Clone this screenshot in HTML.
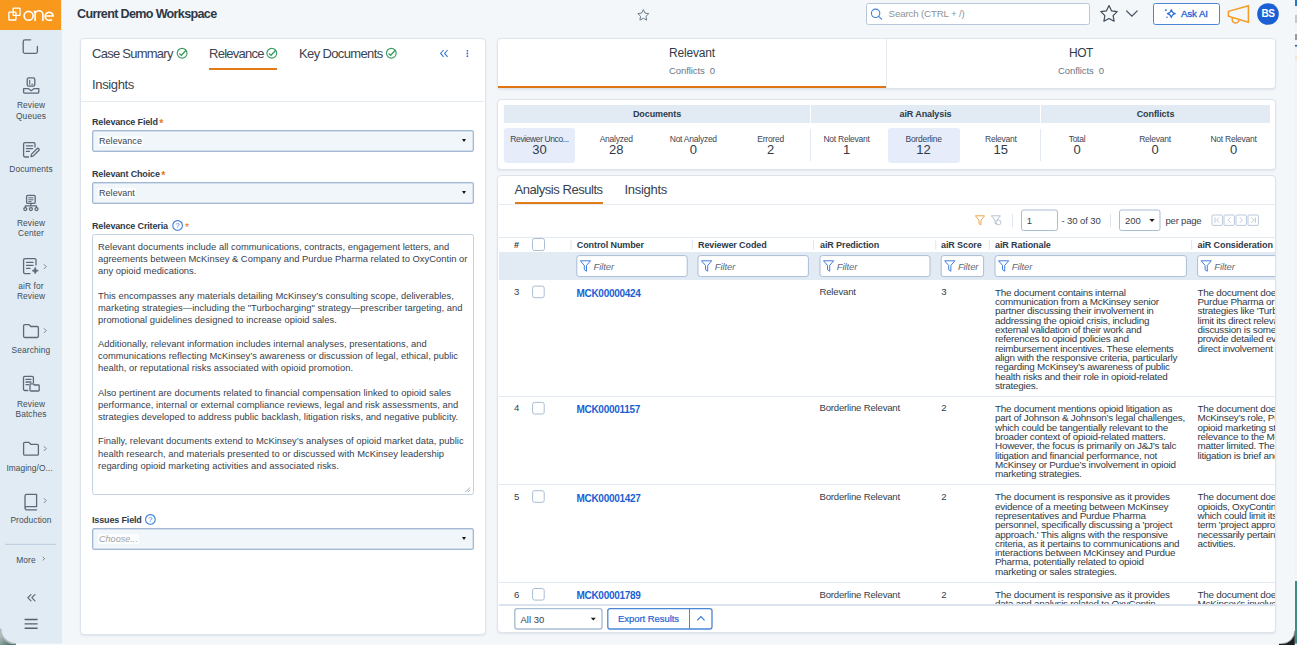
<!DOCTYPE html>
<html><head><meta charset="utf-8">
<style>
*{box-sizing:border-box;margin:0;padding:0}
html,body{width:1297px;height:645px;overflow:hidden;background:#f3f7fa;font-family:"Liberation Sans",sans-serif;color:#2e3a48}
.a{position:absolute;white-space:nowrap}
svg{position:absolute;overflow:visible}
#side{position:absolute;left:0;top:0;width:62px;height:645px;background:#e1ebf4}
#logo{position:absolute;left:0;top:0;width:61px;height:30px;background:#f8981d}
.nv{position:absolute;left:0;width:62px;text-align:center;font-size:8.4px;color:#414b57;line-height:10.5px;letter-spacing:.12px}
.card{position:absolute;background:#fff;border:1px solid #dde4ec;border-radius:4px;box-shadow:0 1px 2px rgba(40,60,90,.09)}
.tab{position:absolute;font-size:13px;color:#3b444f;white-space:nowrap;letter-spacing:-.5px;line-height:15px}
.lbl{position:absolute;font-size:9px;font-weight:bold;color:#2e3a48;white-space:nowrap;letter-spacing:-.15px;line-height:11px}
.sel{position:absolute;left:92px;width:382px;height:22px;border:1px solid #a3b8d2;box-shadow:inset 0 0 0 .4px #b4c6dc;border-radius:2px;background:#f1f6fb;font-size:9px;color:#3a4450;padding:0 5px;line-height:20.5px;letter-spacing:.05px}
.caret{position:absolute;right:7px;top:8.4px;width:0;height:0;border-left:2.6px solid transparent;border-right:2.6px solid transparent;border-top:3.2px solid #111}
.st{color:#e07b1a;font-size:10.5px;margin-left:1.5px;position:relative;top:2px;line-height:5px}
.td{position:absolute;font-size:9.6px;color:#333e4b;line-height:11px;white-space:nowrap;letter-spacing:-.2px}
.mk{position:absolute;font-size:10px;font-weight:bold;color:#1b5fd4;line-height:11px;white-space:nowrap;letter-spacing:-.3px}
.tx{position:absolute;font-size:9.9px;color:#2f3a47;line-height:9.33px;white-space:nowrap;letter-spacing:-.24px}
.th{position:absolute;top:239.5px;font-size:9px;font-weight:bold;color:#2e3a48;line-height:11px;letter-spacing:-.1px;white-space:nowrap}
.fp{position:absolute;top:260.5px;font-size:9.5px;font-style:italic;color:#5f6a77;line-height:11px;letter-spacing:-.1px}
.sh{position:absolute;top:108.5px;text-align:center;font-size:9px;font-weight:bold;color:#2e3a48;line-height:11px;letter-spacing:-.1px}
.sl{position:absolute;top:133.5px;width:80px;text-align:center;font-size:8.5px;color:#3a4553;line-height:10px;letter-spacing:-.25px}
.sn{position:absolute;top:142.3px;width:80px;text-align:center;font-size:13px;color:#2e3a48;line-height:15px}
</style></head><body>
<!-- SIDEBAR -->
<div id="side"></div>
<div id="logo"></div>

<!-- logo -->
<svg style="left:0;top:0" width="61" height="30" viewBox="0 0 61 30">
<g fill="none" stroke="#fff" stroke-width="1.3">
<rect x="8.85" y="12.1" width="7.1" height="7.9" rx=".4"/>
<rect x="13.15" y="8.15" width="6.9" height="7.3" rx=".4"/>
<ellipse cx="28.6" cy="15.85" rx="4.55" ry="4.45" stroke-width="1.6"/>
<path d="M33.6 11.6h1.5v9.3M35.1 14.6a3.9 3.9 0 0 1 7.8 0v6.3" stroke-width="1.6"/>
<path d="M45.2 16h8a4.05 4.05 0 1 0-1.3 3.3" stroke-width="1.6"/>
</g>
</svg>
<!-- icon 1 -->
<svg style="left:0;top:0" width="62" height="645" viewBox="0 0 62 645">
<g fill="none" stroke="#5d6978" stroke-width="1.3" stroke-linecap="round" stroke-linejoin="round">
<path d="M30.6 39.8H25a1.8 1.8 0 0 0-1.8 1.8V51.6a1.8 1.8 0 0 0 1.8 1.8H35.6a1.8 1.8 0 0 0 1.8-1.8V46.4"/>
<!-- review queues -->
<rect x="27.2" y="77.9" width="7.6" height="8.3" rx="1.6"/>
<path d="M29.7 80.3v3.9M31.8 84.2h1" stroke-width="1.1"/>
<path d="M23.6 88.6h4.6l3 2.2 3-2.2h4.6v3.3a1.2 1.2 0 0 1-1.2 1.2H24.8a1.2 1.2 0 0 1-1.2-1.2z"/>
<!-- documents -->
<path d="M35 147V144a1.4 1.4 0 0 0-1.4-1.4H25a1.4 1.4 0 0 0-1.4 1.4v11.6a1.4 1.4 0 0 0 1.4 1.4h3.5"/>
<path d="M26.4 145.8h6.2M26.4 148.6h6.2M26.4 151.4h3"/>
<path d="M31 156.6l.6-2.5 5.4-5.4a1.25 1.25 0 0 1 1.8 1.8l-5.4 5.4z"/>
<!-- review center -->
<rect x="26.6" y="195.4" width="8.6" height="8" rx="1.2"/>
<path d="M28.7 197.8h4.4M28.7 199.8h4.4M28.7 201.6h2.4" stroke-width="1"/>
<path d="M30.9 203.4v2.4M25.3 207.6v-1.8h11.2v1.8"/>
<circle cx="25.3" cy="209.1" r="1.5"/><circle cx="30.9" cy="209.1" r="1.5"/><circle cx="36.5" cy="209.1" r="1.5"/>
<!-- air for review -->
<path d="M36 265V260a1.4 1.4 0 0 0-1.4-1.4H25a1.4 1.4 0 0 0-1.4 1.4v12.2a1.4 1.4 0 0 0 1.4 1.4h5"/>
<path d="M26.6 262.4h6.4M26.6 265.4h6.4M26.6 268.4h3.4"/>
<path d="M35.2 267.5q.4 2.6 3.2 3.2q-2.8.6-3.2 3.2q-.4-2.6-3.2-3.2q2.8-.6 3.2-3.2z" fill="#5d6978" stroke-width=".6"/>
<!-- searching folder -->
<path d="M23.6 325.8a1.2 1.2 0 0 1 1.2-1.2h4.2l1.8 1.9h6.4a1.2 1.2 0 0 1 1.2 1.2v8.6a1.2 1.2 0 0 1-1.2 1.2H24.8a1.2 1.2 0 0 1-1.2-1.2z"/>
<!-- review batches -->
<path d="M33.4 382.5V377.6a1.3 1.3 0 0 0-1.3-1.3H24.8a1.3 1.3 0 0 0-1.3 1.3v11.6a1.3 1.3 0 0 0 1.3 1.3h3"/>
<path d="M26 379.4h5M26 382h5M26 384.6h2.6"/>
<path d="M30 384.6a.8.8 0 0 1 .8-.8h2.4l1.2 1.2h4a.8.8 0 0 1 .8.8v4.4a.8.8 0 0 1-.8.8h-7.6a.8.8 0 0 1-.8-.8z"/>
<!-- imaging folder -->
<path d="M23.6 443.6a1.2 1.2 0 0 1 1.2-1.2h4.2l1.8 1.9h6.4a1.2 1.2 0 0 1 1.2 1.2v8.4a1.2 1.2 0 0 1-1.2 1.2H24.8a1.2 1.2 0 0 1-1.2-1.2z"/>
<!-- production book -->
<path d="M25 507.6V496a1.6 1.6 0 0 1 1.6-1.6h10v12.2H26.6a1.6 1.6 0 0 0 0 3.2h10"/>
<!-- chevrons -->
<path d="M44.2 264.6l2 2-2 2M44.2 328.6l2 2-2 2M44.2 446.6l2 2-2 2M44.2 498.6l2 2-2 2M43 557l1.6 1.6-1.6 1.6" stroke="#77828f" stroke-width="1"/>
<!-- collapse -->
<path d="M31 594.6l-3.2 3.1 3.2 3.1M35 594.6l-3.2 3.1 3.2 3.1" stroke="#55606e" stroke-width="1.1"/>
<path d="M24.6 619.5h13M24.6 623.9h13M24.6 628.3h13" stroke="#55606e" stroke-width="1.4" stroke-linecap="butt"/>
</g>
<path d="M5 544.3h51" stroke="#b9cadc" stroke-width="1"/>
</svg>
<div class="nv" style="top:100.3px">Review<br>Queues</div>
<div class="nv" style="top:164.2px">Documents</div>
<div class="nv" style="top:217.8px">Review<br>Center</div>
<div class="nv" style="top:280.8px">aiR for<br>Review</div>
<div class="nv" style="top:344.8px">Searching</div>
<div class="nv" style="top:398.8px">Review<br>Batches</div>
<div class="nv" style="top:462.8px;letter-spacing:.05px;left:-1.5px">Imaging/O...</div>
<div class="nv" style="top:515.4px">Production</div>
<div class="nv" style="top:554.8px;left:-5px">More</div>

<!-- TOPBAR -->
<div class="a" style="left:77px;top:7.3px;font-size:12.6px;font-weight:bold;color:#2e3744;letter-spacing:-.68px;line-height:15px">Current Demo Workspace</div>


<!-- top bar icons -->
<svg style="left:0;top:0" width="1297" height="40" viewBox="0 0 1297 40">
<path d="M643.3 9.6l1.7 3.5 3.8.5-2.8 2.7.7 3.8-3.4-1.8-3.4 1.8.7-3.8-2.8-2.7 3.8-.5z" fill="none" stroke="#6f7c8b" stroke-width="1"/>
<rect x="866.5" y="3.5" width="223" height="21" rx="2" fill="#fff" stroke="#b7c8dc"/>
<circle cx="875.6" cy="13.3" r="4.2" fill="none" stroke="#3f7fd8" stroke-width="1.1"/>
<path d="M878.6 16.4l3 2.8" stroke="#3f7fd8" stroke-width="1.1" stroke-linecap="round"/>
<path d="M1109 5.6l2.5 5.2 5.7.8-4.1 4 1 5.6-5.1-2.7-5.1 2.7 1-5.6-4.1-4 5.7-.8z" fill="none" stroke="#3f4a57" stroke-width="1.2" stroke-linejoin="round"/>
<path d="M1126.3 10.6l5.6 5.6 5.6-5.6" fill="none" stroke="#3f4a57" stroke-width="1.2"/>
<rect x="1153.5" y="3.5" width="66" height="21" rx="2" fill="#fff" stroke="#4a86d6"/>
<path d="M1171.3 9.6q.6 3.4 4 4q-3.4.6-4 4q-.6-3.4-4-4q3.4-.6 4-4z" fill="none" stroke="#2f6fd0" stroke-width="1.1" stroke-linejoin="round"/>
<path d="M1165.9 9.2v2M1164.9 10.2h2" stroke="#2f6fd0" stroke-width=".9"/><circle cx="1167" cy="17.3" r=".8" fill="#2f6fd0"/>
<path d="M1228.4 11.4L1248.4 5.7V22.3L1228.4 16.2Z" fill="none" stroke="#f59a23" stroke-width="1.5" stroke-linejoin="miter"/>
<path d="M1232.7 17.5A3.5 3.5 0 1 0 1239.1 19.3" fill="none" stroke="#f59a23" stroke-width="1.4"/>
<circle cx="1268" cy="14" r="10.8" fill="#1b5fd4"/>
</svg>
<div class="a" style="left:888.6px;top:7.8px;font-size:9.8px;color:#8e9398;letter-spacing:-.2px;line-height:11px">Search (CTRL + /)</div>
<div class="a" style="left:1181px;top:7.8px;font-size:9.7px;color:#1b5fd4;letter-spacing:-.1px;-webkit-text-stroke:.3px #1b5fd4;line-height:11px">Ask AI</div>
<div class="a" style="left:1257px;top:7.8px;width:22px;text-align:center;font-size:10px;font-weight:bold;color:#fff;line-height:11px;letter-spacing:-.4px">BS</div>

<!-- LEFT CARD -->
<div class="card" style="left:80px;top:38px;width:406px;height:596.5px"></div>
<div class="tab" style="left:92px;top:46px;letter-spacing:-.74px">Case Summary</div>
<div class="tab" style="left:209px;top:46px;letter-spacing:-.74px">Relevance</div>
<div class="a" style="left:209px;top:68px;width:68px;height:2px;background:#e07b1a"></div>
<div class="tab" style="left:299px;top:46px;letter-spacing:-.63px">Key Documents</div>
<div class="tab" style="left:92px;top:77px;letter-spacing:-.35px">Insights</div>
<div class="a" style="left:81px;top:101px;width:403px;height:1px;background:#e3eaf1"></div>

<div class="lbl" style="left:92px;top:116.7px">Relevance Field<span class="st">*</span></div>
<div class="sel" style="top:130px"><span style="background:#fcfdfe;padding:0 1px">Relevance</span><div class="caret"></div></div>
<div class="lbl" style="left:92px;top:168.7px">Relevant Choice<span class="st">*</span></div>
<div class="sel" style="top:182px"><span style="background:#fcfdfe;padding:0 1px">Relevant</span><div class="caret"></div></div>
<div class="lbl" style="left:92px;top:220.7px">Relevance Criteria</div>


<svg style="left:0;top:0" width="490" height="645" viewBox="0 0 490 645">
<g fill="none" stroke="#3b9c62" stroke-width="1.15">
<circle cx="182.1" cy="53.2" r="4.9"/><path d="M179.3 53.5l2.1 1.8 4.6-5" stroke-width="1.3"/>
<circle cx="271.8" cy="53.2" r="4.9"/><path d="M269.0 53.5l2.1 1.8 4.6-5" stroke-width="1.3"/>
<circle cx="391.3" cy="53.2" r="4.9"/><path d="M388.5 53.5l2.1 1.8 4.6-5" stroke-width="1.3"/>
</g>
<path d="M443.6 50l-3 3.4 3 3.4M447.6 50l-3 3.4 3 3.4" fill="none" stroke="#3a7bd5" stroke-width="1.1"/>
<g fill="#2f6fd0"><circle cx="467.4" cy="50.8" r=".9"/><circle cx="467.4" cy="53.5" r=".9"/><circle cx="467.4" cy="56.2" r=".9"/></g>
<circle cx="177.6" cy="225.4" r="4.8" fill="none" stroke="#3b7dd8" stroke-width="1.1"/>
<text x="177.6" y="228.4" font-family="Liberation Sans" font-size="7.5" fill="#3b7dd8" text-anchor="middle">?</text>
<circle cx="150.4" cy="519.4" r="4.8" fill="none" stroke="#3b7dd8" stroke-width="1.1"/>
<text x="150.4" y="522.4" font-family="Liberation Sans" font-size="7.5" fill="#3b7dd8" text-anchor="middle">?</text>
<rect x="92.5" y="234.5" width="381" height="260" rx="2" fill="#fff" stroke="#c3d2e3"/>
<path d="M465.5 492l4.5-4.5M468 492l2-2" stroke="#8e98a4" stroke-width=".8"/>
</svg>
<div class="a" style="left:185px;top:222px;font-size:10.5px;color:#e07b1a;line-height:11px">*</div>
<div class="a" style="left:98px;top:240.9px;font-size:9.4px;color:#37414d;line-height:12.15px;white-space:pre;letter-spacing:.02px">Relevant documents include all communications, contracts, engagement letters, and
agreements between McKinsey &amp; Company and Purdue Pharma related to OxyContin or
any opioid medications.

This encompasses any materials detailing McKinsey’s consulting scope, deliverables,
marketing strategies—including the "Turbocharging" strategy—prescriber targeting, and
promotional guidelines designed to increase opioid sales.

Additionally, relevant information includes internal analyses, presentations, and
communications reflecting McKinsey’s awareness or discussion of legal, ethical, public
health, or reputational risks associated with opioid promotion.

Also pertinent are documents related to financial compensation linked to opioid sales
performance, internal or external compliance reviews, legal and risk assessments, and
strategies developed to address public backlash, litigation risks, and negative publicity.

Finally, relevant documents extend to McKinsey’s analyses of opioid market data, public
health research, and materials presented to or discussed with McKinsey leadership
regarding opioid marketing activities and associated risks.</div>
<div class="lbl" style="left:92px;top:514.7px">Issues Field</div>
<div class="sel" style="top:528px;color:#9ea3a8;font-style:italic"><span style="background:#fcfdfe;padding:0 1px">Choose...</span><div class="caret"></div></div>

<!-- RIGHT TOP CARD -->
<div class="card" style="left:497px;top:38px;width:779px;height:51px"></div>
<!-- STATS CARD -->
<div class="card" style="left:497px;top:99px;width:779px;height:71px"></div>

<!-- top card content -->
<div class="a" style="left:497.5px;top:85.6px;width:388.5px;height:2.8px;background:#df7412"></div>
<div class="a" style="left:885.5px;top:39px;width:1px;height:49px;background:#e6ecf2"></div>
<div class="a" style="left:498px;top:46.3px;width:388px;text-align:center;font-size:12px;color:#323c48;line-height:14px;letter-spacing:-.2px">Relevant</div>
<div class="a" style="left:498px;top:65px;width:388px;text-align:center;font-size:9.5px;color:#6b7686;line-height:11px;letter-spacing:-.1px">Conflicts&nbsp;&nbsp;0</div>
<div class="a" style="left:886px;top:46.3px;width:390px;text-align:center;font-size:12px;color:#323c48;line-height:14px;letter-spacing:-.5px">HOT</div>
<div class="a" style="left:886px;top:65px;width:390px;text-align:center;font-size:9.5px;color:#6b7686;line-height:11px;letter-spacing:-.1px">Conflicts&nbsp;&nbsp;0</div>

<!-- stats -->
<div class="a" style="left:504px;top:105px;width:306px;height:18px;background:#e2eaf3"></div>
<div class="a" style="left:811px;top:105px;width:229px;height:18px;background:#e2eaf3"></div>
<div class="a" style="left:1041px;top:105px;width:229px;height:18px;background:#e2eaf3"></div>
<div class="sh" style="left:504px;width:306px">Documents</div>
<div class="sh" style="left:811px;width:229px">aiR Analysis</div>
<div class="sh" style="left:1041px;width:229px">Conflicts</div>
<div class="a" style="left:504px;top:128px;width:71px;height:35px;background:#e7ecfb;border-radius:3px"></div>
<div class="a" style="left:888px;top:128px;width:72px;height:35px;background:#e7ecfb;border-radius:3px"></div>
<div class="a" style="left:809.5px;top:129px;width:1px;height:32px;background:#e3e9f0"></div>
<div class="a" style="left:1039.5px;top:129px;width:1px;height:32px;background:#e3e9f0"></div>
<div class="sl" style="left:499.5px;letter-spacing:-.4px">Reviewer Unco...</div><div class="sn" style="left:499.5px">30</div>
<div class="sl" style="left:576.2px">Analyzed</div><div class="sn" style="left:576.2px">28</div>
<div class="sl" style="left:653.3px">Not Analyzed</div><div class="sn" style="left:653.3px">0</div>
<div class="sl" style="left:730.6px">Errored</div><div class="sn" style="left:730.6px">2</div>
<div class="sl" style="left:806.5px">Not Relevant</div><div class="sn" style="left:806.5px">1</div>
<div class="sl" style="left:883.6px">Borderline</div><div class="sn" style="left:883.6px">12</div>
<div class="sl" style="left:960.8px">Relevant</div><div class="sn" style="left:960.8px">15</div>
<div class="sl" style="left:1037px">Total</div><div class="sn" style="left:1037px">0</div>
<div class="sl" style="left:1115px">Relevant</div><div class="sn" style="left:1115px">0</div>
<div class="sl" style="left:1193.5px">Not Relevant</div><div class="sn" style="left:1193.5px">0</div>

<!-- RESULTS CARD -->
<div class="card" style="left:497px;top:175px;width:779px;height:458px"></div>

<!-- results content -->
<div style="position:absolute;left:0;top:0;width:1275px;height:604.5px;overflow:hidden">
<div class="td" style="left:514px;top:286.10px">3</div>
<div class="mk" style="left:576.5px;top:288.00px">MCK00000424</div>
<div class="td" style="left:819.5px;top:286.10px">Relevant</div>
<div class="td" style="left:941.2px;top:286.10px">3</div>
<div class="tx" style="left:995px;top:287.60px">The document contains internal<br>communication from a McKinsey senior<br>partner discussing their involvement in<br>addressing the opioid crisis, including<br>external validation of their work and<br>references to opioid policies and<br>reimbursement incentives. These elements<br>align with the responsive criteria, particularly<br>regarding McKinsey’s awareness of public<br>health risks and their role in opioid-related<br>strategies.</div>
<div class="tx" style="left:1197.5px;top:287.60px">The document does not mention<br>Purdue Pharma or OxyContin<br>strategies like 'Turbocharging,' which<br>limit its direct relevance. The<br>discussion is somewhat general and does<br>provide detailed evidence of<br>direct involvement in marketing.</div>
<div class="a" style="left:499px;top:395.8px;width:776px;height:1px;background:#e3e9f0"></div>
<div class="td" style="left:514px;top:402.40px">4</div>
<div class="mk" style="left:576.5px;top:404.30px">MCK00001157</div>
<div class="td" style="left:819.5px;top:402.40px">Borderline Relevant</div>
<div class="td" style="left:941.2px;top:402.40px">2</div>
<div class="tx" style="left:995px;top:403.90px">The document mentions opioid litigation as<br>part of Johnson &amp; Johnson’s legal challenges,<br>which could be tangentially relevant to the<br>broader context of opioid-related matters.<br>However, the focus is primarily on J&amp;J’s talc<br>litigation and financial performance, not<br>McKinsey or Purdue’s involvement in opioid<br>marketing strategies.</div>
<div class="tx" style="left:1197.5px;top:403.90px">The document does not discuss<br>McKinsey’s role, Purdue Pharma, or<br>opioid marketing strategies, limiting<br>relevance to the McKinsey<br>matter limited. The opioid<br>litigation is brief and general.</div>
<div class="a" style="left:499px;top:484.1px;width:776px;height:1px;background:#e3e9f0"></div>
<div class="td" style="left:514px;top:490.70px">5</div>
<div class="mk" style="left:576.5px;top:492.60px">MCK00001427</div>
<div class="td" style="left:819.5px;top:490.70px">Borderline Relevant</div>
<div class="td" style="left:941.2px;top:490.70px">2</div>
<div class="tx" style="left:995px;top:492.20px">The document is responsive as it provides<br>evidence of a meeting between McKinsey<br>representatives and Purdue Pharma<br>personnel, specifically discussing a 'project<br>approach.' This aligns with the responsive<br>criteria, as it pertains to communications and<br>interactions between McKinsey and Purdue<br>Pharma, potentially related to opioid<br>marketing or sales strategies.</div>
<div class="tx" style="left:1197.5px;top:492.20px">The document does not mention<br>opioids, OxyContin, or marketing,<br>which could limit its relevance. The<br>term 'project approach' does not<br>necessarily pertain to opioid<br>activities.</div>
<div class="a" style="left:499px;top:581.9px;width:776px;height:1px;background:#e3e9f0"></div>
<div class="td" style="left:514px;top:588.50px">6</div>
<div class="mk" style="left:576.5px;top:590.40px">MCK00001789</div>
<div class="td" style="left:819.5px;top:588.50px">Borderline Relevant</div>
<div class="td" style="left:941.2px;top:588.50px">2</div>
<div class="tx" style="left:995px;top:590.00px">The document is responsive as it provides<br>data and analysis related to OxyContin<br>sales.</div>
<div class="tx" style="left:1197.5px;top:590.00px">The document does not detail<br>McKinsey’s involvement directly.</div>
</div>
<div class="a" style="left:499px;top:604px;width:776px;height:2px;background:#dae3ed"></div>

<div class="a" style="left:514.5px;top:182px;font-size:13px;color:#37414d;line-height:15px;letter-spacing:-.45px">Analysis Results</div>
<div class="a" style="left:624.5px;top:182px;font-size:13px;color:#37414d;line-height:15px;letter-spacing:-.3px">Insights</div>
<div class="a" style="left:514.5px;top:201.5px;width:88.5px;height:2px;background:#e07b1a"></div>
<div class="a" style="left:499px;top:203.5px;width:776px;height:1px;background:#e6ecf2"></div>
<div class="a" style="left:499px;top:236.7px;width:776px;height:1px;background:#e3e9f0"></div>
<div class="a" style="left:499px;top:252px;width:776px;height:28.3px;background:#e2eaf3"></div>
<svg style="left:0;top:0" width="1297" height="645" viewBox="0 0 1297 645">
<path d="M975.4 215.8h9.2l-3.6 4.4v4.6l-2-1.2v-3.4z" fill="none" stroke="#f0a54a" stroke-width="1" stroke-linejoin="round"/>
<path d="M991.4 215.8h9l-3.4 4.2v4.4l-2-1.2v-3.2z" fill="none" stroke="#b6c2d0" stroke-width="1" stroke-linejoin="round"/>
<circle cx="998.6" cy="222.4" r="2.4" fill="#fff" stroke="#b6c2d0" stroke-width=".9"/>
<path d="M1012.5 214v13M1110.5 214v13" stroke="#dfe5ec" stroke-width="1"/>
<rect x="1021.5" y="210" width="36" height="20.5" rx="2" fill="#fff" stroke="#a9bdd6"/>
<rect x="1119.5" y="210" width="40.5" height="20.5" rx="2" fill="#fff" stroke="#a9bdd6"/>
<path d="M1149.4 219l2.6 3 2.6-3z" fill="#1a1a1a"/>
<g fill="none" stroke="#b3c3d6" stroke-width=".9">
<rect x="1212" y="215" width="10.4" height="10.4" rx="1"/><rect x="1224" y="215" width="10.4" height="10.4" rx="1"/>
<rect x="1236" y="215" width="10.4" height="10.4" rx="1"/><rect x="1248" y="215" width="10.4" height="10.4" rx="1"/>
<path d="M1215 217.5v5.4M1219.2 217.5l-2.6 2.7 2.6 2.7M1230.6 217.5l-2.6 2.7 2.6 2.7M1239.8 217.5l2.6 2.7-2.6 2.7M1251.4 217.5l2.6 2.7-2.6 2.7M1255.4 217.5v5.4"/>
</g>
<path d="M571 239.5v10M692.3 239.5v10M813.5 239.5v10M935.8 239.5v10M989.4 239.5v10M1191.7 239.5v10" stroke="#dfe5ec" stroke-width="1"/>
<g fill="#fff" stroke="#a9bdd6" stroke-width="1">
<rect x="532.5" y="238.5" width="12" height="12" rx="2"/>
<rect x="576.8" y="255.6" width="110.4" height="21" rx="2.5"/>
<rect x="698" y="255.6" width="110.4" height="21" rx="2.5"/>
<rect x="820" y="255.6" width="110" height="21" rx="2.5"/>
<rect x="941.2" y="255.6" width="42.4" height="21" rx="2.5"/>
<rect x="995" y="255.6" width="191.4" height="21" rx="2.5"/>
<path d="M1275 255.6H1200.1a2.5 2.5 0 0 0-2.5 2.5V274.1a2.5 2.5 0 0 0 2.5 2.5H1275"/>
<rect x="532.6" y="286.1" width="11.6" height="11.6" rx="2"/>
<rect x="532.6" y="402.4" width="11.6" height="11.6" rx="2"/>
<rect x="532.6" y="490.7" width="11.6" height="11.6" rx="2"/>
<rect x="532.6" y="588.5" width="11.6" height="11.6" rx="2"/>
</g>
<g fill="none" stroke="#3577d8" stroke-width=".95" stroke-linejoin="round">
<path d="M580.3 260.8h10.2l-4 4.6v5.8l-2.2-1.5v-4.3z"/>
<path d="M701.5 260.8h10.2l-4 4.6v5.8l-2.2-1.5v-4.3z"/>
<path d="M823.5 260.8h10.2l-4 4.6v5.8l-2.2-1.5v-4.3z"/>
<path d="M944.7 260.8h10.2l-4 4.6v5.8l-2.2-1.5v-4.3z"/>
<path d="M998.5 260.8h10.2l-4 4.6v5.8l-2.2-1.5v-4.3z"/>
<path d="M1201.1 260.8h10.2l-4 4.6v5.8l-2.2-1.5v-4.3z"/>
</g>
</svg>
<div class="a" style="left:1026.8px;top:215px;font-size:9.5px;color:#37414d;line-height:11px">1</div>
<div class="a" style="left:1061.5px;top:215px;font-size:9.5px;color:#37414d;line-height:11px;letter-spacing:-.1px">- 30 of 30</div>
<div class="a" style="left:1125px;top:215px;font-size:9.5px;color:#37414d;line-height:11px">200</div>
<div class="a" style="left:1165.5px;top:215px;font-size:9.5px;color:#37414d;line-height:11px;letter-spacing:-.2px">per page</div>
<div class="th" style="left:514px">#</div>
<div class="th" style="left:576.8px">Control Number</div>
<div class="th" style="left:698px">Reviewer Coded</div>
<div class="th" style="left:820px">aiR Prediction</div>
<div class="th" style="left:941px">aiR Score</div>
<div class="th" style="left:995px">aiR Rationale</div>
<div class="th" style="left:1197.5px">aiR Consideration</div>
<div class="fp" style="left:593.5px">Filter</div>
<div class="fp" style="left:714.7px">Filter</div>
<div class="fp" style="left:836.7px">Filter</div>
<div class="fp" style="left:957.9px">Filter</div>
<div class="fp" style="left:1011.7px">Filter</div>
<div class="fp" style="left:1214.3px">Filter</div>


<!-- footer -->
<svg style="left:0;top:0" width="1297" height="645" viewBox="0 0 1297 645">
<rect x="514.8" y="608.6" width="87.2" height="20.4" rx="2.2" fill="#fff" stroke="#a9bdd6" stroke-width="1.4"/>
<path d="M590.8 617.8l2.5 2.8 2.5-2.8z" fill="#1a1a1a"/>
<rect x="607.8" y="608.6" width="104.2" height="20.4" rx="2.2" fill="#fff" stroke="#4a86d6" stroke-width="1.3"/>
<path d="M689.5 608.5v20.5" stroke="#4a86d6"/>
<path d="M697.2 620.4l3.7-3.7 3.7 3.7" fill="none" stroke="#3a7bd5" stroke-width="1.2"/>
</svg>
<div class="a" style="left:520.5px;top:613.5px;font-size:9.5px;color:#37414d;line-height:11px">All 30</div>
<div class="a" style="left:607.5px;top:612.8px;width:82px;text-align:center;font-size:9.5px;color:#1f63d4;line-height:11px;letter-spacing:-.05px;-webkit-text-stroke:.2px #1f63d4">Export Results</div>


<!-- window frame -->
<svg style="left:0;top:0" width="1297" height="645" viewBox="0 0 1297 645">
<rect x="1295" y="0" width="2" height="645" fill="#f3f3f3"/>
<rect x="1295" y="0" width="2" height="6" fill="#2a74c9"/>
<rect x="1295" y="15" width="2" height="8" fill="#c8c8c8"/>
<rect x="1295" y="34" width="2" height="6" fill="#9a9a9a"/>
<rect x="1295" y="45" width="2" height="1.5" fill="#1f4fa8"/>
<rect x="1295" y="56" width="2" height="5" fill="#f6e6d2"/>
<rect x="1295" y="581" width="2" height="64" fill="#3f8c84"/>
<rect x="0" y="643.6" width="1297" height="1.4" fill="#f7f9fa"/>
<defs><linearGradient id="cg" x1="0" y1="0" x2="1" y2="1"><stop offset="0" stop-color="#d5d8d8"/><stop offset=".45" stop-color="#8fa3a0"/><stop offset="1" stop-color="#1f5c58"/></linearGradient></defs><path d="M0 628V645H16V643.8H15.6A15 15 0 0 1 0.6 628.8V628Z" fill="url(#cg)"/>
<path d="M0.6 628.8A15 15 0 0 0 15.6 643.8" fill="none" stroke="#b4b8b8" stroke-width="1.6"/>
<path d="M1294.8 630.8V645H1279V643.8H1281.8A13 13 0 0 0 1294.8 630.8Z" fill="#1a1f1f"/>
<path d="M1294.8 630.8A13 13 0 0 1 1281.8 643.8" fill="none" stroke="#8a9090" stroke-width="1"/>
</svg>

</body></html>
